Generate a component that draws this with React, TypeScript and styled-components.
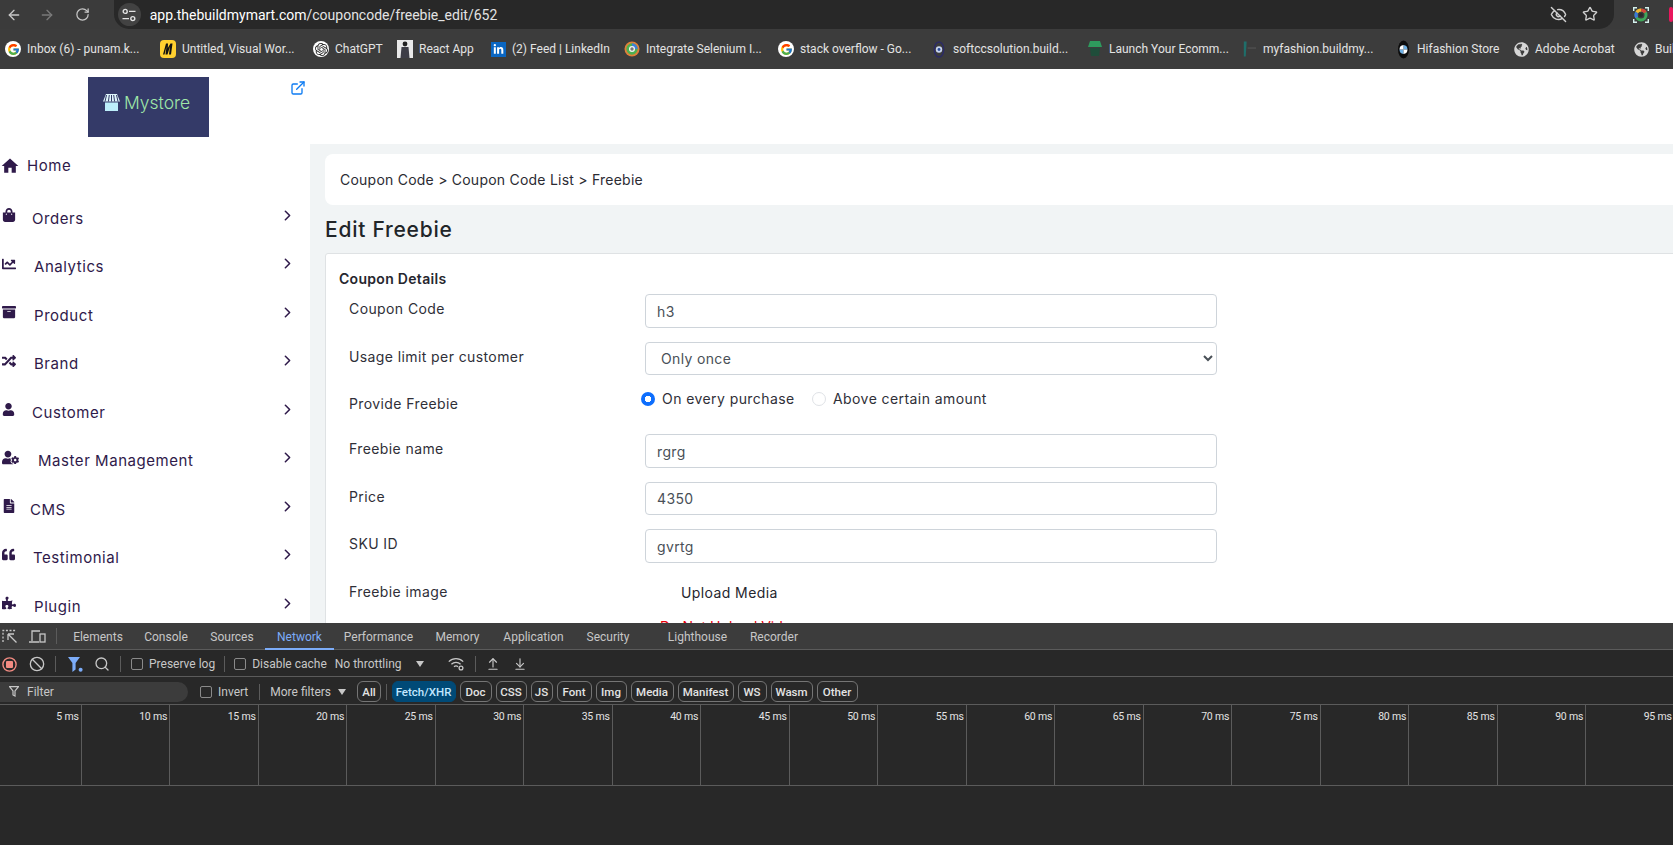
import React from 'react';
import styled, { createGlobalStyle } from 'styled-components';
import {
  ArrowLeft,
  ArrowRight,
  RotateCw,
  EyeOff,
  Star,
  ExternalLink,
  Search,
  Ban,
  ArrowUpFromLine,
  ArrowDownToLine,
  ChevronRight,
} from 'lucide-react';
import {
  FaShoppingBag,
  FaChartLine,
  FaArchive,
  FaRandom,
  FaUser,
  FaUserCog,
  FaFileAlt,
  FaQuoteLeft,
  FaPuzzlePiece,
  FaLinkedinIn,
  FaGlobeAmericas,
} from 'react-icons/fa';
import { MdHome } from 'react-icons/md';
import { FcGoogle } from 'react-icons/fc';
import { SiOpenai } from 'react-icons/si';

const MiroIcon = () => (
  <svg width="16" height="18" viewBox="0 0 16 18">
    <rect width="16" height="18" rx="4" fill="#ffd02f" />
    <path d="M10.500 3.500h2L11 14.500H9l1-8-2.500 8h-2l1-8-2 8H3l3-11h2L7.800 8z" fill="#111" />
  </svg>
);

const ChromeLensIcon = () => (
  <svg width="17" height="18" viewBox="0 0 17 18">
    <circle cx="8.500" cy="9" r="8" fill="#e0803a" />
    <circle cx="8.500" cy="9" r="6" fill="#4caf50" />
    <path d="M8.500 3a6 6 0 0 1 6 6h-6z" fill="#3f7fd8" />
    <circle cx="8.500" cy="9" r="3.200" fill="#f4f4f4" />
    <circle cx="8.500" cy="9" r="1.800" fill="#777" />
  </svg>
);

const ReactAppIcon = () => (
  <svg width="16" height="18" viewBox="0 0 16 18">
    <rect width="16" height="18" fill="#e9e9e9" />
    <circle cx="8" cy="4" r="2.400" fill="#222" />
    <path d="M4.500 7h7l1 11h-9z" fill="#3d3d46" />
  </svg>
);

const SoftccIcon = () => (
  <svg width="17" height="17" viewBox="0 0 17 17">
    <ellipse cx="8.500" cy="8.500" rx="5" ry="8" fill="none" stroke="#2b2a66" strokeWidth="1.500" />
    <circle cx="8.500" cy="8.500" r="3.400" fill="#c8d4ef" />
    <circle cx="8.500" cy="8.500" r="1.500" fill="#2b4c9a" />
  </svg>
);

const LaunchIcon = () => (
  <svg width="16" height="18" viewBox="0 0 16 18">
    <path d="M3 1h10l2 6H1z" fill="#2e9a5d" />
    <path d="M3 8h10l-1 8H4z" fill="#1f4d3a" />
  </svg>
);

const MyFashionIcon = () => (
  <svg width="17" height="18" viewBox="0 0 17 18">
    <path d="M3 1h3L5 17H3z" fill="#1f6e6a" />
    <path d="M7 7h9v2H7z" fill="#4a4a4a" />
  </svg>
);

const HifashionIcon = () => (
  <svg width="15" height="19" viewBox="0 0 15 19">
    <ellipse cx="7.500" cy="9.500" rx="5.500" ry="9" fill="#0b0b0b" />
    <path d="M7.500 5a4.500 4.500 0 0 1 4 4.500h-4zM7.500 14a4.500 4.500 0 0 1-4-4.500h4z" fill="#6fb1e6" />
    <path d="M7.500 5a4.500 4.500 0 0 0-4 4.500h4zM7.500 14a4.500 4.500 0 0 0 4-4.500h-4z" fill="#fff" />
  </svg>
);

const TuneIcon = () => (
  <svg width="14" height="14" viewBox="0 0 14 14" fill="none" stroke="#e3e3e3" strokeWidth="1.400">
    <circle cx="3.200" cy="3.400" r="2" />
    <path d="M7 3.400h6.500M.5 10.600H7" />
    <circle cx="10.800" cy="10.600" r="2" />
  </svg>
);

const ExtensionIcon = () => (
  <svg width="16" height="16" viewBox="0 0 16 16" fill="none">
    <path d="M.7 4V.7H4M12 .7h3.300V4M15.300 12v3.300H12M4 15.300H.7V12" stroke="#d5f2ee" strokeWidth="1.400" />
    <circle cx="8" cy="8" r="5" stroke="#3fa75a" strokeWidth="3" />
    <path d="M8 3a5 5 0 0 1 4.300 2.500" stroke="#d8453a" strokeWidth="3" />
    <path d="M3.700 5.500A5 5 0 0 1 8 3" stroke="#f2b632" strokeWidth="3" />
    <path d="M3.700 10.500a5 5 0 0 1 0-5" stroke="#3d75d8" strokeWidth="3" />
    <circle cx="8" cy="8" r="2" fill="#2a2a2a" />
  </svg>
);

const StoreIcon = () => (
  <svg width="17" height="17" viewBox="0 0 17 17">
    <path d="M3 0h11l3 7.500H0z" fill="#dff6fb" />
    <path d="M3.500 1 2 7.500M6.300 1 5.400 7.500M8.500 1v6.500M10.700 1l.9 6.500M13.500 1 15 7.500" stroke="#343a68" strokeWidth="1" />
    <rect x="2" y="8.500" width="13" height="8.500" fill="#bdeefa" />
  </svg>
);

const InspectIcon = () => (
  <svg width="16" height="16" viewBox="0 0 16 16" fill="none" stroke="#c7c7c7" strokeWidth="1.300">
    <path d="M1 14V2.500h12.500" strokeDasharray="2 1.600" />
    <path d="M6 6h6M6 6v6M6.500 6.500l8 8" />
  </svg>
);

const DeviceIcon = () => (
  <svg width="17" height="15" viewBox="0 0 17 15" fill="none" stroke="#c7c7c7" strokeWidth="1.300">
    <path d="M3 12V2h8M0 13h10" />
    <rect x="11" y="5" width="5" height="8" />
  </svg>
);

const RecordIcon = () => (
  <svg width="15" height="15" viewBox="0 0 15 15">
    <circle cx="7.500" cy="7.500" r="6.600" fill="none" stroke="#f28b82" strokeWidth="1.400" />
    <rect x="4" y="4" width="7" height="7" rx="1" fill="#f28b82" />
  </svg>
);

const FunnelDotIcon = () => (
  <svg width="15" height="15" viewBox="0 0 15 15">
    <path d="M0 0h12L7.600 6v6.500L4.400 15V6z" fill="#7cacf8" />
    <circle cx="12.600" cy="12.800" r="2" fill="#7cacf8" />
  </svg>
);

const FunnelIcon = () => (
  <svg width="10" height="11" viewBox="0 0 10 11" fill="none" stroke="#c7c7c7" strokeWidth="1.200">
    <path d="M.5.6h9L6 5v5L4 9V5z" />
  </svg>
);

const WifiGearIcon = () => (
  <svg width="17" height="14" viewBox="0 0 17 14" fill="none" stroke="#c7c7c7" strokeWidth="1.300">
    <path d="M.8 4.600c4-4 10.400-4 14.400 0M3.400 7.200c2.600-2.500 6.600-2.500 9.200 0M6 9.700c1.200-1 2.800-1 4 0" />
    <circle cx="13" cy="11" r="1.900" />
  </svg>
);

const GlobalStyle = createGlobalStyle`
  html, body {
    margin: 0;
    height: 100%;
    overflow: hidden;
    background: #282828;
  }
  * {
    box-sizing: border-box;
  }
`;

const Screen = styled.div`
  width: 1673px;
  height: 845px;
  display: flex;
  flex-direction: column;
  overflow: hidden;
`;

/* browser chrome */
const AddressBar = styled.div`
  height: 29px;
  flex: none;
  background: #3b3b3b;
  display: flex;
  align-items: center;
  color: #c7c7c7;
`;

const NavButton = styled.span<{ $w: number; $dim?: boolean }>`
  width: ${(p) => p.$w}px;
  display: flex;
  justify-content: center;
  color: ${(p) => (p.$dim ? '#7a7a7a' : '#c7c7c7')};
`;

const NavGap = styled.span`
  width: 13px;
`;

const Omnibox = styled.div`
  width: 1504px;
  height: 29px;
  background: #282828;
  border-radius: 0 0 15px 15px;
  display: flex;
  align-items: center;
  padding: 0 16px 0 4px;
`;

const TuneChip = styled.span`
  width: 23px;
  height: 23px;
  border-radius: 50%;
  background: #424242;
  display: flex;
  align-items: center;
  justify-content: center;
  margin-right: 9px;
`;

const Url = styled.span`
  flex: 1;
  font: 14px Roboto, sans-serif;
  color: #e3e3e3;
  span {
    color: #fff;
  }
`;

const OmniIcons = styled.span`
  display: flex;
  gap: 15px;
  color: #d0d0d0;
`;

const ExtensionSlot = styled.span`
  margin-left: 19px;
  display: flex;
`;

const ProfileSliver = styled.span`
  margin-left: 20px;
  width: 4px;
  height: 15px;
  flex: none;
  border-radius: 2px;
  background: #e8175d;
`;

const BookmarksBar = styled.div`
  height: 40px;
  flex: none;
  background: #3c3c3c;
  display: flex;
  align-items: center;
  padding-left: 5px;
  overflow: hidden;
`;

const Bookmark = styled.div<{ $w: number }>`
  flex: 0 0 ${(p) => p.$w}px;
  display: flex;
  align-items: center;
  gap: 6px;
  font: 12px Roboto, sans-serif;
  color: #e3e3e3;
  white-space: nowrap;
`;

const FaviconDisc = styled.span`
  width: 16px;
  height: 16px;
  border-radius: 50%;
  background: #fff;
  display: flex;
  align-items: center;
  justify-content: center;
  color: #222;
`;

const LinkedInBox = styled.span`
  width: 15px;
  height: 15px;
  background: #0a66c2;
  color: #fff;
  display: flex;
  align-items: center;
  justify-content: center;
`;

const FaviconSlot = styled.span`
  width: 16px;
  height: 18px;
  flex: none;
  display: flex;
  align-items: center;
  justify-content: center;
`;

/* the web page */
const Page = styled.div`
  height: 554px;
  flex: none;
  background: #fff;
  overflow: hidden;
  font-family: Inter, 'Liberation Sans', sans-serif;
`;

const Header = styled.div`
  height: 75px;
  padding: 8px 0 0 88px;
  display: flex;
  align-items: flex-start;
`;

const Logo = styled.div`
  width: 121px;
  height: 60px;
  background: #343a68;
  display: flex;
  align-items: center;
  gap: 4px;
  padding: 0 0 10px 15px;
  color: #9fe8a8;
  font: 300 17.500px Inter, sans-serif;
`;

const OpenLink = styled.span`
  margin: 3px 0 0 81px;
  color: #0d7bf2;
  display: flex;
`;

const Body = styled.div`
  display: flex;
  height: 479px;
`;

const Sidebar = styled.nav`
  width: 310px;
  flex: none;
  color: #2f1a4a;
`;

const NavRow = styled.div<{ $home?: boolean }>`
  height: ${(p) => (p.$home ? 44 : 48.500)}px;
  margin-bottom: ${(p) => (p.$home ? 2.750 : 0)}px;
  display: flex;
  align-items: center;
  padding-left: 2px;
  padding-right: 14px;
`;

const NavIcon = styled.span<{ $w: number }>`
  width: ${(p) => p.$w}px;
  flex: none;
  display: flex;
`;

const NavText = styled.span<{ $home?: boolean }>`
  flex: 1;
  font-size: 15px;
  letter-spacing: 0.55px;
  line-height: 20px;
  padding-top: ${(p) => (p.$home ? 0 : 7)}px;
`;

const Main = styled.main`
  flex: 1;
  min-width: 0;
  background: #f1f4f5;
  padding: 10px 0 0 15px;
`;

const Breadcrumb = styled.div`
  height: 51px;
  margin-right: -20px;
  background: #fff;
  border-radius: 8px;
  display: flex;
  align-items: center;
  padding-left: 15px;
  font-size: 14px;
  letter-spacing: 0.23px;
  color: #2b2b33;
`;

const Title = styled.h1`
  margin: 0;
  height: 48px;
  display: flex;
  align-items: center;
  font-size: 21px;
  font-weight: 500;
  letter-spacing: 0.75px;
  color: #212529;
`;

const Card = styled.section`
  margin-right: -20px;
  height: 500px;
  background: #fff;
  border: 1px solid #dfe2e4;
  border-radius: 3px;
  padding: 15px 0 0 13px;
`;

const SectionTitle = styled.h2`
  margin: 0 0 5px;
  font-size: 14px;
  line-height: 20px;
  font-weight: 600;
  letter-spacing: 0.3px;
  color: #26262e;
`;

const FormRow = styled.div`
  display: grid;
  grid-template-columns: 296px 572px;
  margin: 0 0 14px 10px;
`;

const Label = styled.label`
  font-size: 14px;
  line-height: 20px;
  letter-spacing: 0.4px;
  color: #2f2f38;
  padding-top: 5px;
`;

const TextInput = styled.input<{ $h?: number }>`
  width: 100%;
  height: ${(p) => p.$h ?? 34}px;
  border: 1px solid #ced4da;
  border-radius: 4px;
  padding: 0 11px;
  font: 14px Inter, sans-serif;
  letter-spacing: 0.35px;
  color: #495057;
  background: #fff;
  outline: none;
`;

const SelectInput = styled.select`
  width: 100%;
  height: 33px;
  border: 1px solid #ced4da;
  border-radius: 4px;
  padding: 0 11px;
  font: 14px Inter, sans-serif;
  letter-spacing: 0.35px;
  color: #495057;
  background: #fff;
  outline: none;
`;

const RadioGroup = styled.div`
  display: flex;
  height: 31px;
  align-items: flex-start;
  margin-left: -4px;
`;

const RadioOption = styled.label<{ $w: number }>`
  flex: 0 0 ${(p) => p.$w}px;
  display: flex;
  align-items: center;
  gap: 7px;
  font-size: 14px;
  line-height: 20px;
  letter-spacing: 0.42px;
  color: #2f2f38;
`;

const Radio = styled.input`
  appearance: none;
  margin: 0;
  width: 14px;
  height: 14px;
  flex: none;
  border-radius: 50%;
  border: 1px solid #dfe2e6;
  background: #fff;
  &:checked {
    border: none;
    background: radial-gradient(circle, #fff 0 3px, #0d6efd 3.500px);
  }
`;

const UploadText = styled.div`
  padding: 6px 0 0 36px;
  font-size: 14px;
  line-height: 20px;
  letter-spacing: 0.4px;
  color: #26262e;
`;

const Warning = styled.div`
  padding-left: 15px;
  margin-top: 14px;
  font-size: 14px;
  line-height: 20px;
  color: #e8000b;
`;

/* devtools */
const DevTools = styled.div`
  flex: 1;
  background: #282828;
  color: #c7c7c7;
  font: 12px Roboto, 'Liberation Sans', sans-serif;
  display: flex;
  flex-direction: column;
  min-height: 0;
`;

const TabStrip = styled.div`
  height: 27px;
  flex: none;
  background: #3c3c3c;
  border-bottom: 1px solid #5b5b5b;
  display: flex;
  align-items: center;
`;

const Tab = styled.span<{ $w: number; $active?: boolean; $after?: number }>`
  flex: 0 0 ${(p) => p.$w}px;
  margin-right: ${(p) => p.$after ?? 0}px;
  align-self: stretch;
  display: flex;
  align-items: center;
  justify-content: center;
  padding-top: 2px;
  color: ${(p) => (p.$active ? '#7cacf8' : '#c7c7c7')};
  border-bottom: 2px solid ${(p) => (p.$active ? '#7cacf8' : 'transparent')};
  margin-bottom: -1px;
`;

const TabLead = styled.span`
  width: 6px;
`;

const ToolRow = styled.div<{ $h: number }>`
  height: ${(p) => p.$h}px;
  flex: none;
  border-bottom: 1px solid #5b5b5b;
  display: flex;
  align-items: center;
  padding-top: 2px;
`;

const Tool = styled.span<{ $x: number }>`
  margin-left: ${(p) => p.$x}px;
  display: inline-flex;
  align-items: center;
  white-space: nowrap;
`;

const Divider = styled.span<{ $x: number }>`
  margin-left: ${(p) => p.$x}px;
  width: 1px;
  height: 16px;
  background: #5b5b5b;
  flex: none;
`;

const Check = styled.span<{ $x: number }>`
  margin: 0 6px 0 ${(p) => p.$x}px;
  width: 12px;
  height: 12px;
  border: 1px solid #8a8a8a;
  border-radius: 2px;
  flex: none;
`;

const Caret = styled.span<{ $x: number }>`
  margin-left: ${(p) => p.$x}px;
  width: 0;
  height: 0;
  border-left: 4px solid transparent;
  border-right: 4px solid transparent;
  border-top: 6px solid #c7c7c7;
  flex: none;
`;

const FilterBox = styled.div`
  width: 188px;
  height: 20px;
  background: #3c3c3c;
  border-radius: 0 10px 10px 0;
  display: flex;
  align-items: center;
  gap: 8px;
  padding-left: 9px;
  flex: none;
`;

const Chips = styled.div`
  display: flex;
  gap: 4px;
  margin-left: 4.500px;
`;

const Chip = styled.span<{ $w: number; $on?: boolean; $x?: number }>`
  flex: 0 0 ${(p) => p.$w}px;
  margin-left: ${(p) => p.$x ?? 0}px;
  height: 21px;
  border-radius: 6px;
  border: 1px solid ${(p) => (p.$on ? '#004a77' : '#757575')};
  background: ${(p) => (p.$on ? '#004a77' : 'transparent')};
  color: ${(p) => (p.$on ? '#c2e7ff' : '#e3e3e3')};
  font-weight: 500;
  font-size: 11.500px;
  display: flex;
  align-items: center;
  justify-content: center;
`;

const Timeline = styled.div`
  height: 81px;
  flex: none;
  border-bottom: 1px solid #5b5b5b;
  display: flex;
  margin-left: -6.800px;
  overflow: hidden;
`;

const Tick = styled.div`
  flex: 0 0 88.500px;
  border-right: 1px solid #5b5b5b;
  text-align: right;
  padding: 5px 2px 0 0;
  font-size: 10.500px;
  letter-spacing: -0.2px;
  line-height: 14px;
  color: #e3e3e3;
`;

const disc = (icon: React.ReactNode) => <FaviconDisc>{icon}</FaviconDisc>;
const globe = <FaGlobeAmericas size={15} color="#d6d6d6" />;

const bookmarks: { label: string; w: number; icon: React.ReactNode }[] = [
  { label: 'Inbox (6) - punam.k...', w: 155, icon: disc(<FcGoogle size={13} />) },
  { label: 'Untitled, Visual Wor...', w: 153, icon: <MiroIcon /> },
  { label: 'ChatGPT', w: 84, icon: disc(<SiOpenai size={13} />) },
  { label: 'React App', w: 93, icon: <ReactAppIcon /> },
  { label: '(2) Feed | LinkedIn', w: 134, icon: <LinkedInBox><FaLinkedinIn size={11} /></LinkedInBox> },
  { label: 'Integrate Selenium I...', w: 154, icon: <ChromeLensIcon /> },
  { label: 'stack overflow - Go...', w: 153, icon: disc(<FcGoogle size={13} />) },
  { label: 'softccsolution.build...', w: 156, icon: <SoftccIcon /> },
  { label: 'Launch Your Ecomm...', w: 154, icon: <LaunchIcon /> },
  { label: 'myfashion.buildmy...', w: 154, icon: <MyFashionIcon /> },
  { label: 'Hifashion Store', w: 118, icon: <HifashionIcon /> },
  { label: 'Adobe Acrobat', w: 120, icon: globe },
  { label: 'Build', w: 60, icon: globe },
];

const navItems: { label: string; icon: React.ReactNode; w: number }[] = [
  { label: 'Orders', icon: <FaShoppingBag size={14} />, w: 30 },
  { label: 'Analytics', icon: <FaChartLine size={14} />, w: 32 },
  { label: 'Product', icon: <FaArchive size={14} />, w: 32 },
  { label: 'Brand', icon: <FaRandom size={14} />, w: 32 },
  { label: 'Customer', icon: <FaUser size={13} />, w: 30 },
  { label: 'Master Management', icon: <FaUserCog size={17} />, w: 36 },
  { label: 'CMS', icon: <FaFileAlt size={14} />, w: 28 },
  { label: 'Testimonial', icon: <FaQuoteLeft size={13} />, w: 31 },
  { label: 'Plugin', icon: <FaPuzzlePiece size={14} />, w: 32 },
];

const tabs: { label: string; w: number; active?: boolean; after?: number }[] = [
  { label: 'Elements', w: 70 },
  { label: 'Console', w: 66 },
  { label: 'Sources', w: 66 },
  { label: 'Network', w: 69, active: true },
  { label: 'Performance', w: 89 },
  { label: 'Memory', w: 69 },
  { label: 'Application', w: 83 },
  { label: 'Security', w: 66, after: 15 },
  { label: 'Lighthouse', w: 83 },
  { label: 'Recorder', w: 70 },
];

const chips: { label: string; w: number }[] = [
  { label: 'Doc', w: 32 },
  { label: 'CSS', w: 31 },
  { label: 'JS', w: 22 },
  { label: 'Font', w: 35 },
  { label: 'Img', w: 31 },
  { label: 'Media', w: 43 },
  { label: 'Manifest', w: 56 },
  { label: 'WS', w: 29 },
  { label: 'Wasm', w: 42 },
  { label: 'Other', w: 41 },
];

const ticks = Array.from({ length: 19 }, (_, i) => `${(i + 1) * 5} ms`);

const App = () => {
  return (
    <Screen>
      <GlobalStyle />
      <AddressBar>
        <NavButton $w={29}><ArrowLeft size={16} /></NavButton>
        <NavButton $w={36} $dim><ArrowRight size={16} /></NavButton>
        <NavButton $w={36}><RotateCw size={15} /></NavButton>
        <NavGap />
        <Omnibox>
          <TuneChip><TuneIcon /></TuneChip>
          <Url>
            <span>app.thebuildmymart.com</span>/couponcode/freebie_edit/652
          </Url>
          <OmniIcons>
            <EyeOff size={17} />
            <Star size={16} />
          </OmniIcons>
        </Omnibox>
        <ExtensionSlot><ExtensionIcon /></ExtensionSlot>
        <ProfileSliver />
      </AddressBar>

      <BookmarksBar>
        {bookmarks.map((b) => (
          <Bookmark key={b.label} $w={b.w}>
            <FaviconSlot>{b.icon}</FaviconSlot>
            {b.label}
          </Bookmark>
        ))}
      </BookmarksBar>

      <Page>
        <Header>
          <Logo>
            <StoreIcon />
            Mystore
          </Logo>
          <OpenLink><ExternalLink size={16} /></OpenLink>
        </Header>
        <Body>
          <Sidebar>
            <NavRow $home>
              <NavIcon $w={25}><MdHome size={20} style={{ marginLeft: -2 }} /></NavIcon>
              <NavText $home>Home</NavText>
            </NavRow>
            {navItems.map((n) => (
              <NavRow key={n.label}>
                <NavIcon $w={n.w}>{n.icon}</NavIcon>
                <NavText>{n.label}</NavText>
                <ChevronRight size={17} strokeWidth={2.200} />
              </NavRow>
            ))}
          </Sidebar>
          <Main>
            <Breadcrumb>Coupon Code &gt; Coupon Code List &gt; Freebie</Breadcrumb>
            <Title>Edit Freebie</Title>
            <Card>
              <SectionTitle>Coupon Details</SectionTitle>
              <FormRow>
                <Label>Coupon Code</Label>
                <TextInput defaultValue="h3" readOnly />
              </FormRow>
              <FormRow>
                <Label>Usage limit per customer</Label>
                <SelectInput defaultValue="once">
                  <option value="once">Only once</option>
                </SelectInput>
              </FormRow>
              <FormRow>
                <Label>Provide Freebie</Label>
                <RadioGroup>
                  <RadioOption $w={171}>
                    <Radio type="radio" name="freebie" defaultChecked />
                    On every purchase
                  </RadioOption>
                  <RadioOption $w={180}>
                    <Radio type="radio" name="freebie" />
                    Above certain amount
                  </RadioOption>
                </RadioGroup>
              </FormRow>
              <FormRow>
                <Label>Freebie name</Label>
                <TextInput defaultValue="rgrg" readOnly />
              </FormRow>
              <FormRow>
                <Label>Price</Label>
                <TextInput $h={33} defaultValue="4350" readOnly />
              </FormRow>
              <FormRow>
                <Label>SKU ID</Label>
                <TextInput defaultValue="gvrtg" readOnly />
              </FormRow>
              <FormRow>
                <Label>Freebie image</Label>
                <div>
                  <UploadText>Upload Media</UploadText>
                  <Warning>Do Not Upload Video</Warning>
                </div>
              </FormRow>
            </Card>
          </Main>
        </Body>
      </Page>

      <DevTools>
        <TabStrip>
          <Tool $x={2}><InspectIcon /></Tool>
          <Tool $x={11}><DeviceIcon /></Tool>
          <Divider $x={10} />
          <TabLead />
          {tabs.map((t) => (
            <Tab key={t.label} $w={t.w} $active={t.active} $after={t.after}>{t.label}</Tab>
          ))}
        </TabStrip>
        <ToolRow $h={27}>
          <Tool $x={2}><RecordIcon /></Tool>
          <Tool $x={12}><Ban size={16} /></Tool>
          <Divider $x={10} />
          <Tool $x={12}><FunnelDotIcon /></Tool>
          <Tool $x={11}><Search size={16} /></Tool>
          <Divider $x={10} />
          <Check $x={10} />
          <span>Preserve log</span>
          <Divider $x={9} />
          <Check $x={9} />
          <span>Disable cache</span>
          <Tool $x={8}>No throttling</Tool>
          <Caret $x={14} />
          <Tool $x={24}><WifiGearIcon /></Tool>
          <Divider $x={10} />
          <Tool $x={10}><ArrowUpFromLine size={14} /></Tool>
          <Tool $x={13}><ArrowDownToLine size={14} /></Tool>
        </ToolRow>
        <ToolRow $h={28}>
          <FilterBox>
            <FunnelIcon />
            Filter
          </FilterBox>
          <Check $x={12} />
          <span>Invert</span>
          <Divider $x={11} />
          <Tool $x={10}>More filters</Tool>
          <Caret $x={7} />
          <Chip $w={24} $x={11}>All</Chip>
          <Divider $x={5} />
          <Chips>
            <Chip $w={64} $on>Fetch/XHR</Chip>
            {chips.map((c) => (
              <Chip key={c.label} $w={c.w}>{c.label}</Chip>
            ))}
          </Chips>
        </ToolRow>
        <Timeline>
          {ticks.map((t) => (
            <Tick key={t}>{t}</Tick>
          ))}
        </Timeline>
      </DevTools>
    </Screen>
  );
};

export default App;
